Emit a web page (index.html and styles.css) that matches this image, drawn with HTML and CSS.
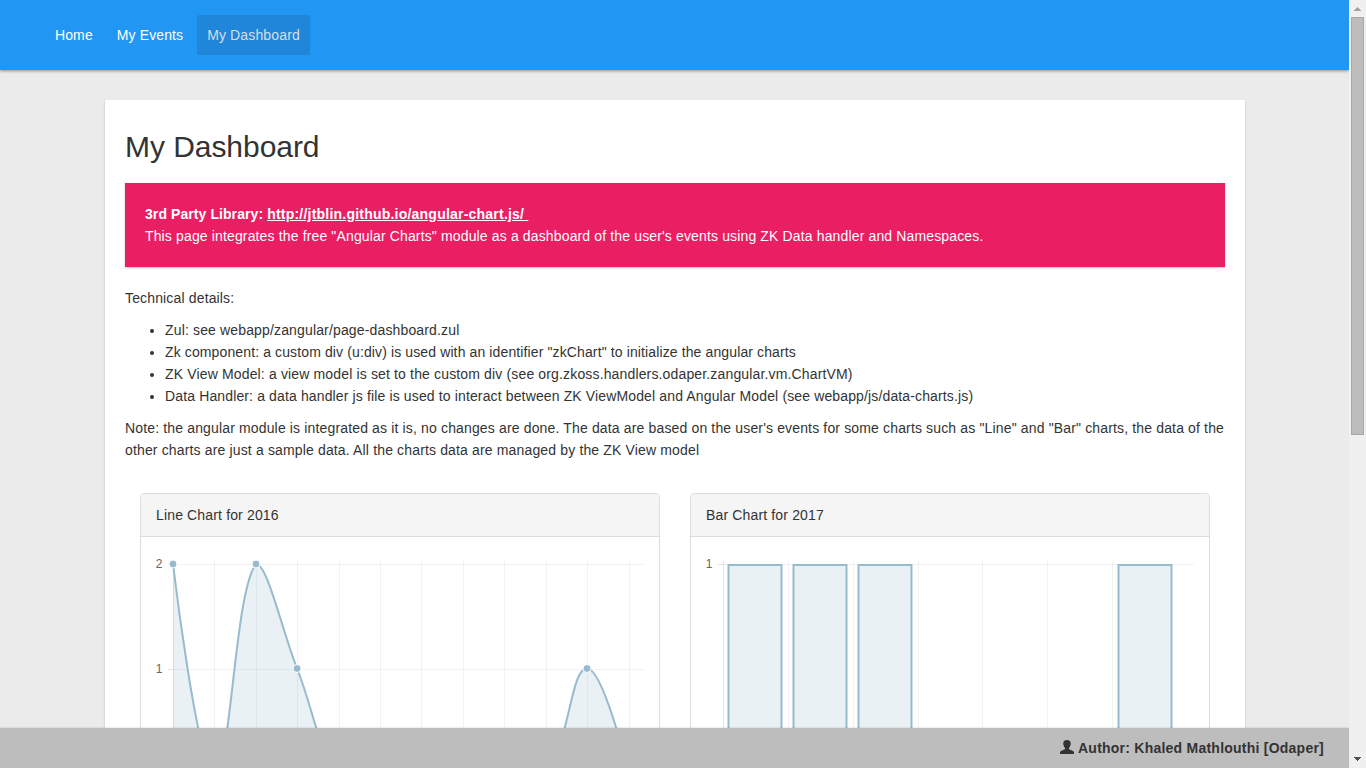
FILE: index.html
```html
<!DOCTYPE html>
<html lang="en">
<head>
<meta charset="utf-8">
<title>My Dashboard</title>
<link rel="stylesheet" href="styles.css">
</head>
<body>
<div class="viewport">
  <div class="page">
    <nav class="navbar">
      <a class="nav-link">Home</a>
      <a class="nav-link">My Events</a>
      <a class="nav-link active">My Dashboard</a>
    </nav>
    <main class="main">
      <section class="card">
        <h1 class="title">My Dashboard</h1>
        <div class="notice">
          <b class="notice-title">3rd Party Library: <a class="notice-link">http://jtblin.github.io/angular-chart.js/&nbsp;</a></b><br>
          This page integrates the free "Angular Charts" module as a dashboard of the user's events using ZK Data handler and Namespaces.
        </div>
        <p class="text">Technical details:</p>
        <ul class="list">
          <li>Zul: see webapp/zangular/page-dashboard.zul</li>
          <li class="tight">Zk component: a custom div (u:div) is used with an identifier "zkChart" to initialize the angular charts</li>
          <li>ZK View Model: a view model is set to the custom div (see org.zkoss.handlers.odaper.zangular.vm.ChartVM)</li>
          <li class="snug">Data Handler: a data handler js file is used to interact between ZK ViewModel and Angular Model (see webapp/js/data-charts.js)</li>
        </ul>
        <p class="text">Note: the angular module is integrated as it is, no changes are done. The data are based on the user's events for some charts such as "Line" and "Bar" charts, the data of the<br>other charts are just a sample data. All the charts data are managed by the ZK View model</p>
        <div class="charts">
          <div class="panel">
            <div class="panel-head">Line Chart for 2016</div>
            <div class="panel-body">
              <svg class="chart" width="488" height="244" viewBox="156 552 488 244">
                <path class="grid" d="M214.500 561V779M256.500 561V779M297.500 561V779M339.500 561V779M380.500 561V779M421.500 561V779M463.500 561V779M504.500 561V779M546.500 561V779M587.500 561V779M629.500 561V779M173 564.500H644M173 669.500H644"/>
                <path class="axis" d="M173.500 561V779M168 564.500H173M168 669.500H173M168 773.500H644"/>
                <text class="tick" x="162.500" y="568">2</text>
                <text class="tick" x="162.500" y="673">1</text>
                <path class="area" d="M173 564C173 564 197.900 773 214.500 773C231.100 773 234.300 591.300 256 564C267.500 564 280.900 626.800 297 668.500C314 710.400 314.900 742.600 339.200 773H546C570 742 570.400 668.500 587 668.500C603.600 668.500 628.500 773 628.500 773H173Z"/>
                <path class="line" d="M173 564C173 564 197.900 773 214.500 773C231.100 773 234.300 591.300 256 564C267.500 564 280.900 626.800 297 668.500C314 710.400 314.900 742.600 339.200 773H546C570 742 570.400 668.500 587 668.500C603.600 668.500 628.500 773 628.500 773"/>
                <g class="dot"><circle cx="173" cy="564" r="4"/><circle cx="256" cy="564" r="4"/><circle cx="297" cy="668.500" r="4"/><circle cx="587" cy="668.500" r="4"/></g>
              </svg>
            </div>
          </div>
          <div class="panel">
            <div class="panel-head">Bar Chart for 2017</div>
            <div class="panel-body">
              <svg class="chart" width="488" height="244" viewBox="706 552 488 244">
                <path class="grid" d="M788.500 561V779M853.500 561V779M918.500 561V779M982.500 561V779M1047.500 561V779M1112.500 561V779M723 564.500H1194"/>
                <path class="axis" d="M723.500 561V779M718 564.500H723M718 773.500H1194"/>
                <text class="tick" x="712.500" y="568">1</text>
                <path class="bar" d="M728.500 773V565H781.500V773M793.500 773V565H846.500V773M858.500 773V565H911.500V773M1118.500 773V565H1171.500V773"/>
              </svg>
            </div>
          </div>
        </div>
      </section>
    </main>
    <footer class="footer">
      <svg class="user" width="14" height="14" viewBox="0 0 14 14"><path d="M7 0C4.400 0 3.200 1.400 3.300 3.500C3.200 3.800 3.200 4.600 3.500 5C3.800 6.300 4.300 7.300 5 8C5.200 8.800 5 9.200 4.400 9.500L1.400 10.700C.4 11.200 0 11.800 0 12.500V14H14V12.500C14 11.800 13.600 11.200 12.600 10.700L9.600 9.500C9 9.200 8.800 8.800 9 8C9.700 7.300 10.200 6.300 10.500 5C10.800 4.600 10.800 3.800 10.700 3.500C10.800 1.400 9.600 0 7 0Z"/></svg>
      <span>Author: Khaled Mathlouthi [Odaper]</span>
    </footer>
  </div>
  <div class="scrollbar">
    <svg width="17" height="17" viewBox="0 0 17 17" shape-rendering="crispEdges"><path fill="#a3a3a3" d="M8 7h1v1h1v1h1v1h1v1H5v-1h1V9h1V8h1z"/></svg>
    <div class="thumb"></div>
    <svg class="down" width="17" height="17" viewBox="0 0 17 17" shape-rendering="crispEdges"><path fill="#505050" d="M5 6h7v1h-1v1h-1v1H9v1H8V9H7V8H6V7H5z"/></svg>
  </div>
</div>
</body>
</html>
```
FILE: styles.css
```css
* { box-sizing: border-box; }
body {
  margin: 0;
  font: 14px/22px "Liberation Sans", Arial, sans-serif;
  letter-spacing: 0.15px;
  color: #333;
  background: #ebebeb;
}
.viewport { display: flex; height: 768px; overflow: hidden; }
.page { flex: 1; min-width: 0; display: flex; flex-direction: column; overflow: hidden; }
.navbar {
  flex: none;
  height: 70px;
  padding: 15px 45px;
  display: flex;
  gap: 4px;
  background: #2196f3;
  box-shadow: 0 1px 3px rgba(0, 0, 0, 0.4);
  position: relative;
  z-index: 1;
}
.nav-link { height: 40px; padding: 9px 10px; border-radius: 2px; color: #fff; letter-spacing: 0.11px; }
.active { background: #1f86da; color: #d9dee2; letter-spacing: 0.14px; }
.main { flex: 1; min-height: 0; overflow: hidden; padding-top: 30px; }
.card {
  width: 1140px;
  margin: 0 auto 0 105px;
  padding: 30px 20px;
  background: #fff;
  box-shadow: 0 1px 2px rgba(0, 0, 0, 0.2);
}
.title { margin: 0 0 20px; font-size: 30px; font-weight: 400; line-height: 33px; letter-spacing: -0.05px; }
.notice {
  height: 84px;
  margin-bottom: 20px;
  padding: 20px;
  color: #fff;
  background: #e91e63;
  box-shadow: 0 1px 2px rgba(0, 0, 0, 0.25);
  letter-spacing: 0.142px;
}
.notice-title { letter-spacing: 0.08px; }
.notice-link { text-decoration: underline; letter-spacing: 0.22px; }
.text { margin: 0 0 10px; white-space: nowrap; }
.list { margin: 0 0 10px; padding-left: 40px; }
.tight { letter-spacing: 0.12px; }
.snug { letter-spacing: 0.135px; }
.charts { display: flex; gap: 30px; padding: 22px 15px 0; }
.panel { flex: 1; border: 1px solid #ddd; border-radius: 4px; background: #fff; }
.panel-head {
  height: 43px;
  padding: 10px 15px;
  border-bottom: 1px solid #ddd;
  border-radius: 3px 3px 0 0;
  background: #f5f5f5;
}
.panel-body { padding: 15px; }
.chart { display: block; }
.grid { fill: none; stroke: rgba(0, 0, 0, 0.05); }
.axis { fill: none; stroke: rgba(0, 0, 0, 0.1); }
.tick { font-size: 12px; letter-spacing: 0; fill: #666; text-anchor: end; }
.area { fill: rgba(151, 187, 205, 0.2); }
.line { fill: none; stroke: #97bbcd; stroke-width: 2; }
.dot { fill: #97bbcd; stroke: #fff; stroke-width: 1; }
.bar { fill: rgba(151, 187, 205, 0.2); stroke: #97bbcd; stroke-width: 2; }
.footer {
  flex: none;
  height: 40px;
  padding: 0 25px;
  display: flex;
  align-items: center;
  justify-content: flex-end;
  gap: 4px;
  font-weight: 700;
  letter-spacing: 0.235px;
  background: #bdbdbd;
  box-shadow: 0 0 2px rgba(0, 0, 0, 0.2);
  position: relative;
  z-index: 1;
}
.user { fill: #333; margin-top: -2px; }
.scrollbar { flex: none; width: 17px; display: flex; flex-direction: column; background: #f0f0f0; }
.thumb { height: 418px; margin: 0 2px; border: 1px solid #a8a8a8; background: #bcbcbc; }
.down { margin-top: auto; }
```
